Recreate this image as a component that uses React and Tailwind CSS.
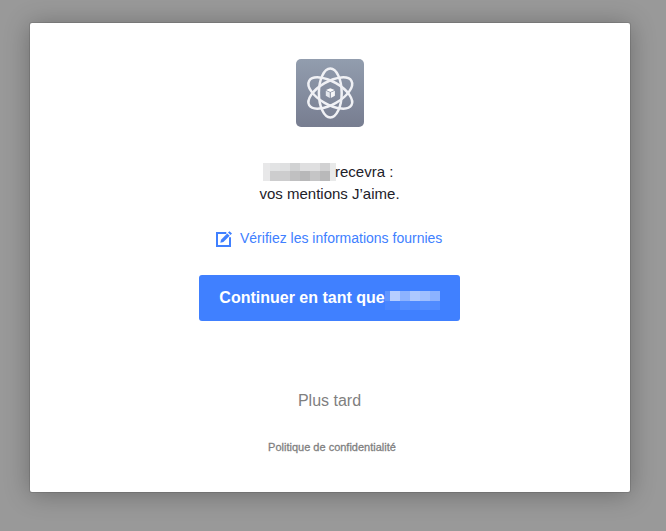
const NAME_MASK = [
  { w: 'w-[7px]', top: 'bg-[#e8e8e9]', bottom: 'bg-[#e8e8e9]' },
  { w: 'w-[10px]', top: 'bg-[#e2e3e4]', bottom: 'bg-[#cdcdce]' },
  { w: 'w-[10px]', top: 'bg-[#dfe0e1]', bottom: 'bg-[#cdcdce]' },
  { w: 'w-[10px]', top: 'bg-[#d1d2d3]', bottom: 'bg-[#c0c0c1]' },
  { w: 'w-[10px]', top: 'bg-[#dfdfe0]', bottom: 'bg-[#b8b8b9]' },
  { w: 'w-[10px]', top: 'bg-[#dfdfe0]', bottom: 'bg-[#c5c5c6]' },
  { w: 'w-[10px]', top: 'bg-[#d1d1d2]', bottom: 'bg-[#b9b9ba]' },
  { w: 'w-[6px]', top: 'bg-[#e8e9e9]', bottom: 'bg-[#e9eaea]' },
];

const BUTTON_MASK = [
  { w: 'w-[5px]', top: 'bg-[#5f95ff]', bottom: 'bg-[#4985ff]' },
  { w: 'w-[10px]', top: 'bg-[#b7ceff]', bottom: 'bg-[#4985ff]' },
  { w: 'w-[10px]', top: 'bg-[#8db3ff]', bottom: 'bg-[#528dff]' },
  { w: 'w-[10px]', top: 'bg-[#adc8ff]', bottom: 'bg-[#4d88ff]' },
  { w: 'w-[10px]', top: 'bg-[#9fbfff]', bottom: 'bg-[#528dff]' },
  { w: 'w-[10px]', top: 'bg-[#8cb2ff]', bottom: 'bg-[#508bff]' },
];

function AtomLogo() {
  return (
    <svg className="size-[68px] shrink-0" viewBox="0 0 68 68" aria-hidden="true">
      <defs>
        <linearGradient id="tile" x1="0" y1="0" x2="0" y2="1">
          <stop offset="0" stopColor="#929dae" />
          <stop offset="1" stopColor="#777d90" />
        </linearGradient>
      </defs>
      <rect width="68" height="68" rx="5" fill="url(#tile)" />
      <g fill="none" stroke="#f0f1f5" strokeWidth="2.5">
        <ellipse cx="34.3" cy="34" rx="11.4" ry="24.4" />
        <ellipse cx="34.3" cy="34" rx="11.4" ry="24.4" transform="rotate(60 34.3 34)" />
        <ellipse cx="34.3" cy="34" rx="11.4" ry="24.4" transform="rotate(120 34.3 34)" />
      </g>
      <path d="M34.3 29.2 38.6 31 34.3 32.9 30 31Z" fill="#fff" />
      <path d="M29.8 31.8 33.8 33.6V38.9L29.8 36.8Z" fill="#e4e7ed" />
      <path d="M38.9 31.8 34.8 33.6V38.9L38.9 36.8Z" fill="#f5f6f8" />
    </svg>
  );
}

function EditIcon() {
  return (
    <svg className="mt-px size-4 shrink-0" viewBox="0 0 16 16" aria-hidden="true">
      <path d="M10.3 2H1v13h13V6.2" fill="none" stroke="#4080ff" strokeWidth="2" />
      <path d="M4.3 11.8 5 8.7 11.2 2.4 13.7 4.8 7.4 11.1Z" fill="#4080ff" />
      <path d="M12 1.6 13.5.2 16 2.6 14.5 4.1Z" fill="#4080ff" />
    </svg>
  );
}

function Mask({ cells, topHeight, bottomHeight }) {
  return (
    <span className="flex">
      {cells.map((cell, i) => (
        <span key={i} className={`flex flex-col ${cell.w}`}>
          <span className={`${topHeight} ${cell.top}`} />
          <span className={`${bottomHeight} ${cell.bottom}`} />
        </span>
      ))}
    </span>
  );
}

export default function App() {
  return (
    <div className="h-[531px] w-[666px] overflow-hidden bg-[#999999] pt-[23px] pl-[30px] font-['Liberation_Sans',Arial,sans-serif]">
      <main className="flex h-[469px] w-[600px] flex-col items-center rounded-[2px] bg-white pt-9 shadow-[0_2px_26px_rgba(0,0,0,0.3),0_0_0_1px_rgba(0,0,0,0.1)]">
        <AtomLogo />
        <div className="mt-[34px] flex w-full flex-col text-[15px] leading-[22px] text-[#1d2129]">
          <div className="flex h-[22px] pl-[233px]">
            <div className="pt-[2px]">
              <Mask cells={NAME_MASK} topHeight="h-2" bottomHeight="h-[10px]" />
            </div>
            <span className="-ml-px whitespace-nowrap">recevra :</span>
          </div>
          <div className="pl-[229.5px] whitespace-nowrap">vos mentions J’aime.</div>
        </div>
        <a className="mt-[22px] flex h-5 w-full items-start gap-2 pl-[186px] text-[14px] leading-[22px] text-[#4080ff]">
          <span className="pt-[3px]"><EditIcon /></span>
          <span className="whitespace-nowrap">Vérifiez les informations fournies</span>
        </a>
        <button className="mt-7 mr-[1px] flex h-[46px] w-[261px] items-center rounded-[3px] bg-[#4080ff] pl-5 text-[16px] font-bold text-white">
          <span className="w-[166px] whitespace-nowrap">Continuer en tant que</span>
          <span className="mt-1"><Mask cells={BUTTON_MASK} topHeight="h-[10px]" bottomHeight="h-[9px]" /></span>
        </button>
        <a className="mt-[69px] mr-px text-[16px] leading-[22px] text-[#7f7f7f]">Plus tard</a>
        <a className="mt-[28px] mr-[-4px] text-[11px] leading-[14px] text-[#7f7f7f] [-webkit-text-stroke:0.3px_#7f7f7f]">Politique de confidentialité</a>
      </main>
    </div>
  );
}
